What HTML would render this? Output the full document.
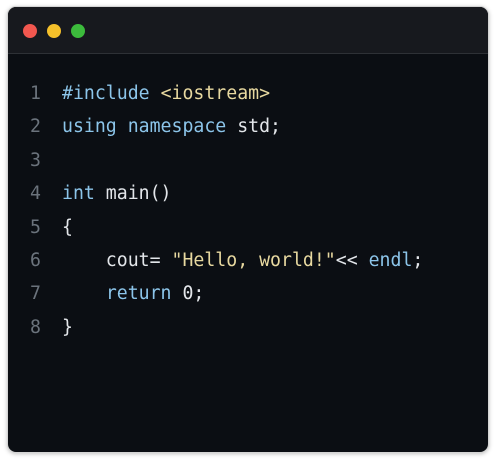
<!DOCTYPE html>
<html><head><style>
html,body{margin:0;padding:0;background:#fff;width:500px;height:461px;overflow:hidden}
.card{position:absolute;left:7px;top:6px;width:480px;height:445px;background:#0b0e13;border-radius:9px;border:1px solid #d4d4d4;box-shadow:0 1px 4px rgba(0,0,0,.25);overflow:hidden}
.hdr{height:46px;background:#17191e;border-bottom:1px solid #2e3136;position:relative}
.d{position:absolute;top:17px;width:14px;height:14px;border-radius:50%}
.code{position:absolute;left:0;top:73px;font-family:"DejaVu Sans Mono",monospace;font-size:18.2px;color:#e3e6ea}
.l{height:33.4px;line-height:28px;position:relative;white-space:pre}
.n{position:absolute;left:22px;color:#6b737c}
.t{position:absolute;left:54px}
.k{color:#8cc5ea}.s{color:#e8d9a0}
</style></head><body>
<div class="card">
<div class="hdr"><div class="d" style="left:15px;background:#f2574f"></div><div class="d" style="left:39px;background:#f5c02a"></div><div class="d" style="left:63px;background:#3cbb3c"></div></div>
<div class="code"><div class="l"><span class="n">1</span><span class="t"><span class="k">#include</span> <span class="s">&lt;iostream&gt;</span></span></div><div class="l"><span class="n">2</span><span class="t"><span class="k">using namespace</span> std;</span></div><div class="l"><span class="n">3</span></div><div class="l"><span class="n">4</span><span class="t"><span class="k">int</span> main()</span></div><div class="l"><span class="n">5</span><span class="t">{</span></div><div class="l"><span class="n">6</span><span class="t">    cout= <span class="s">"Hello, world!"</span>&lt;&lt; <span class="k">endl</span>;</span></div><div class="l"><span class="n">7</span><span class="t">    <span class="k">return</span> 0;</span></div><div class="l"><span class="n">8</span><span class="t">}</span></div></div>
</div>
</body></html>
